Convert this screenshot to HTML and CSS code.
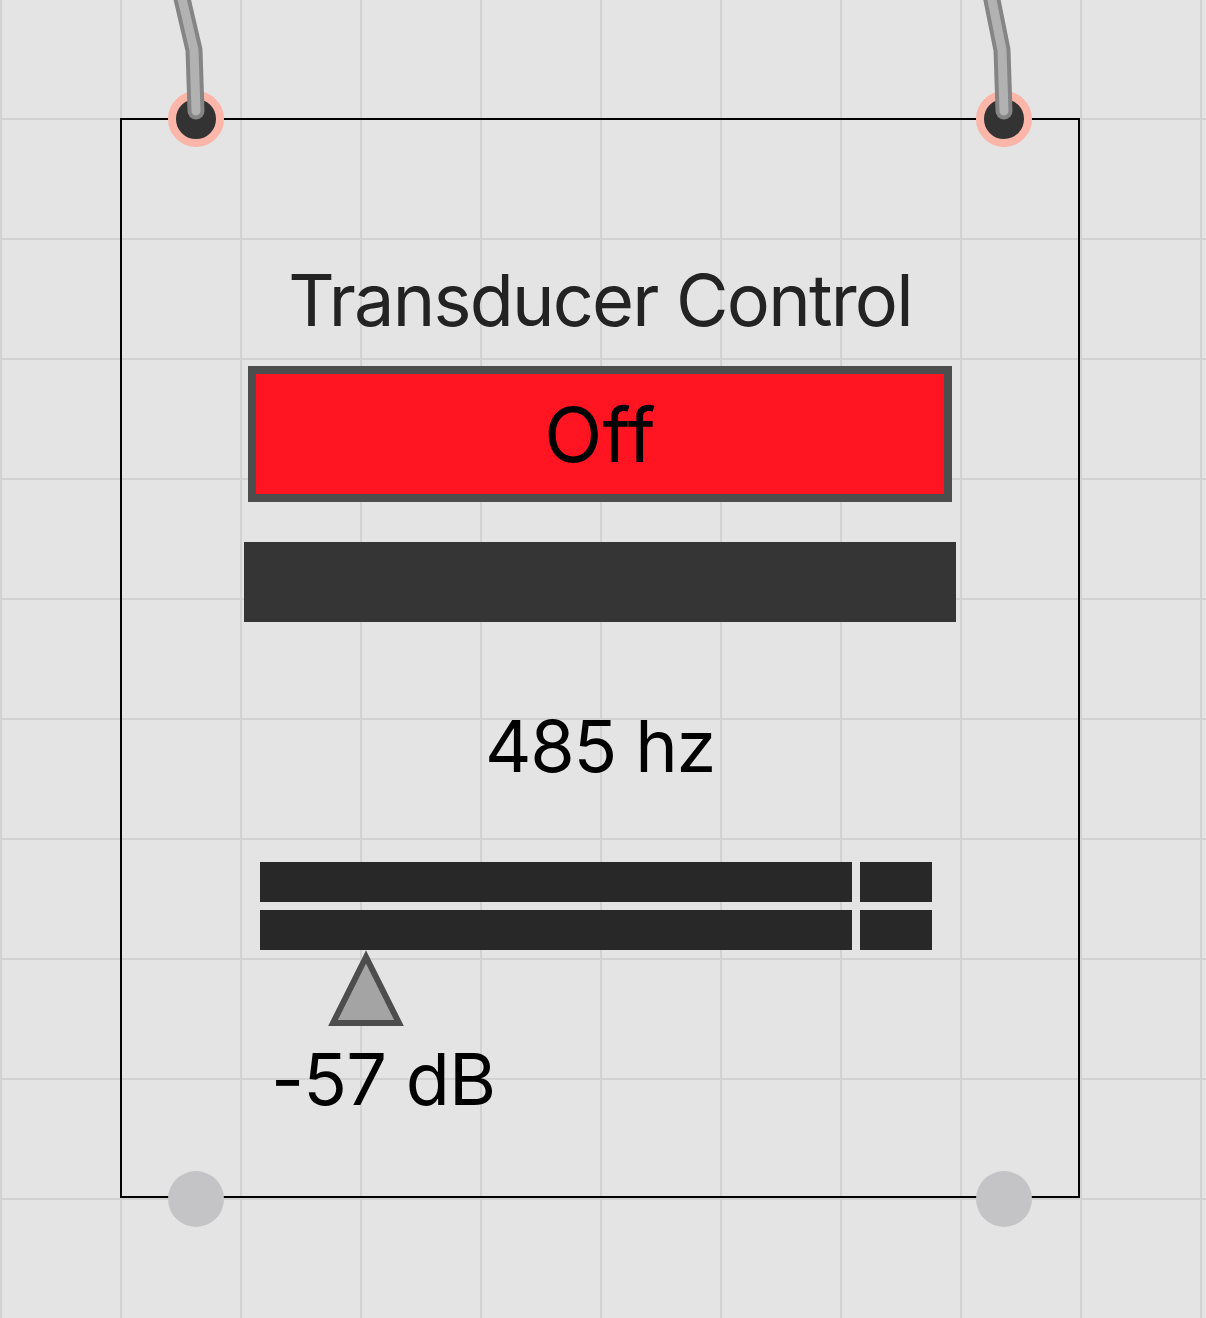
FILE: index.html
```html
<!DOCTYPE html>
<html lang="en">
<head>
<meta charset="utf-8">
<title>Transducer Control</title>
<link rel="stylesheet" href="styles.css">
</head>
<body>
<div class="canvas">
  <svg class="wires" width="1206" height="1318" viewBox="0 0 1206 1318">
    <path class="wire-outer" d="M196 111 L194 50 L180 -10"/>
    <path class="wire-inner" d="M196 111 L194 50 L180 -10"/>
    <path class="wire-outer" d="M1004 111 L1002 50 L990 -10"/>
    <path class="wire-inner" d="M1004 111 L1002 50 L990 -10"/>
  </svg>
  <div class="panel">
    <h1 class="title">Transducer Control</h1>
    <div class="toggle">Off</div>
    <div class="level-bar"></div>
    <div class="freq">485 hz</div>
    <div class="meter">
      <div class="meter-row"><div class="seg seg-main"></div><div class="seg seg-peak"></div></div>
      <div class="meter-row"><div class="seg seg-main"></div><div class="seg seg-peak"></div></div>
    </div>
    <svg class="marker" width="80" height="84" viewBox="0 0 80 84">
      <polygon points="40,11 7,77 73,77"/>
    </svg>
    <div class="db">-57 dB</div>
  </div>
  <div class="port port-in port-tl"></div>
  <div class="port port-in port-tr"></div>
  <div class="port port-out port-bl"></div>
  <div class="port port-out port-br"></div>
</div>
</body>
</html>
```
FILE: styles.css
```css
html, body {
  margin: 0;
  padding: 0;
}
body {
  width: 1206px;
  height: 1318px;
  overflow: hidden;
  background-color: #e4e4e4;
  background-image:
    linear-gradient(to right, #d2d2d2 2px, transparent 2px),
    linear-gradient(to bottom, #d2d2d2 2px, transparent 2px);
  background-size: 120px 120px;
  background-position: 0 0, 0 -2px;
  font-family: Inter, "Liberation Sans", sans-serif;
}
.canvas {
  position: relative;
  width: 1206px;
  height: 1318px;
}
.wires {
  position: absolute;
  left: 0;
  top: 0;
  z-index: 2;
}
.wire-outer {
  fill: none;
  stroke: #858585;
  stroke-width: 17;
  stroke-linecap: round;
  stroke-linejoin: round;
}
.wire-inner {
  fill: none;
  stroke: #b2b2b2;
  stroke-width: 9;
  stroke-linecap: round;
  stroke-linejoin: round;
}
.panel {
  position: absolute;
  left: 120px;
  top: 118px;
  width: 960px;
  height: 1080px;
  box-sizing: border-box;
  border: 2px solid #000;
  display: flex;
  flex-direction: column;
  align-items: center;
}
.title {
  margin: 144px 0 0;
  font-size: 72px;
  line-height: 72px;
  font-weight: 400;
  letter-spacing: -1.8px;
  color: #232323;
}
.toggle {
  margin-top: 30px;
  width: 704px;
  height: 136px;
  box-sizing: border-box;
  border: 8px solid #4d4d4d;
  background: #fe1521;
  color: #000;
  font-size: 76px;
  display: flex;
  align-items: center;
  justify-content: center;
}
.level-bar {
  margin-top: 40px;
  width: 712px;
  height: 80px;
  background: #353535;
}
.freq {
  margin-top: 88px;
  font-size: 72px;
  line-height: 72px;
  letter-spacing: -1.2px;
  color: #000;
}
.meter {
  margin-top: 80px;
  align-self: flex-start;
  margin-left: 138px;
  display: flex;
  flex-direction: column;
  gap: 8px;
}
.meter-row {
  display: flex;
  gap: 8px;
}
.seg {
  height: 40px;
  background: #282828;
}
.seg-main { width: 592px; }
.seg-peak { width: 72px; }
.marker {
  display: block;
  align-self: flex-start;
  margin-left: 204px;
  margin-top: -4px;
}
.marker polygon {
  fill: #a4a4a4;
  stroke: #4d4d4d;
  stroke-width: 6;
  stroke-linejoin: miter;
}
.db {
  align-self: flex-start;
  margin-left: 149px;
  margin-top: 13px;
  font-size: 72px;
  line-height: 72px;
  letter-spacing: -0.8px;
  color: #000;
}
.port {
  position: absolute;
  width: 56px;
  height: 56px;
  border-radius: 50%;
  box-sizing: border-box;
  z-index: 1;
}
.port-in {
  background: #333333;
  border: 8px solid #fbb6a9;
}
.port-out {
  background: #c4c4c6;
}
.port-tl { left: 168px; top: 91px; }
.port-tr { left: 976px; top: 91px; }
.port-bl { left: 168px; top: 1171px; }
.port-br { left: 976px; top: 1171px; }
```
